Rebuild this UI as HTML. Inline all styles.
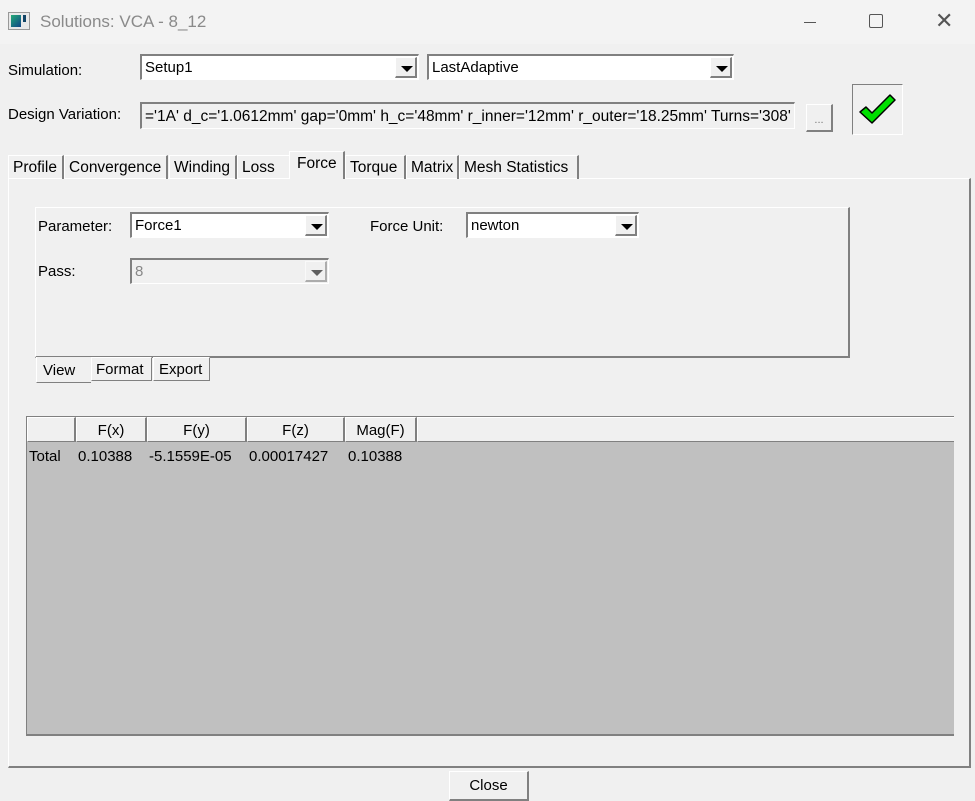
<!DOCTYPE html>
<html><head><meta charset="utf-8"><style>
*{box-sizing:border-box;margin:0;padding:0}
body{width:975px;height:793px;background:#f0f0f0;font-family:"Liberation Sans",Arial,sans-serif;font-size:15px;color:#000;position:relative;overflow:hidden}
.a{position:absolute}
.sunk{border-top:2px solid #808080;border-left:2px solid #808080;border-bottom:1px solid #fff;border-right:1px solid #fff;background:#fff}
.combo{position:absolute;height:26px;padding:3px 3px;white-space:nowrap;overflow:hidden}
.dd{position:absolute;right:1px;top:1px;bottom:1px;width:22px;background:#f0f0f0;border-right:2px solid #808080;border-bottom:2px solid #808080;border-top:1px solid #fff;border-left:1px solid #fff}
.dd:after{content:"";position:absolute;left:5px;top:8px;border-left:6px solid transparent;border-right:6px solid transparent;border-top:6px solid #000}
.tab{position:absolute;top:155px;height:24px;border-top:1px solid #fff;border-left:1px solid #fff;border-right:2px solid #808080;padding:3px 4px;white-space:nowrap;font-size:15.5px}
.btn{position:absolute;border-top:1px solid #fff;border-left:1px solid #fff;border-right:2px solid #808080;border-bottom:2px solid #808080;background:#f0f0f0;text-align:center}
.th{position:absolute;top:0;height:25px;border-right:2px solid #808080;border-top:1px solid #fff;border-left:1px solid #fff;border-bottom:1px solid #808080;text-align:center;padding-top:4px;background:#f0f0f0}
.td{position:absolute;top:31px}
</style></head><body>
<div class="a" style="left:0;top:0;width:975px;height:44px;background:#f3f3f3"></div>
<div class="a" style="left:8px;top:12px;width:22px;height:18px;border:1px solid #999;background:#e8e8e8"><div class="a" style="left:2px;top:2px;width:10px;height:12px;background:linear-gradient(135deg,#2a7,#148)"></div><div class="a" style="left:14px;top:2px;width:3px;height:7px;background:#146"></div></div>
<div class="a" style="left:40px;top:12px;font-size:17px;color:#8a8a8a">Solutions: VCA - 8_12</div>
<div class="a" style="left:804px;top:22px;width:12px;height:1px;background:#555"></div>
<div class="a" style="left:869px;top:14px;width:14px;height:14px;border:1.5px solid #555;border-radius:2px"></div>
<div class="a" style="left:935px;top:8px;font-size:22px;color:#555">✕</div>

<div class="a" style="left:8px;top:62px">Simulation:</div>
<div class="combo sunk" style="left:140px;top:54px;width:279px">Setup1<div class="dd"></div></div>
<div class="combo sunk" style="left:427px;top:54px;width:307px">LastAdaptive<div class="dd"></div></div>
<div class="a" style="left:8px;top:106px">Design Variation:</div>
<div class="combo sunk" style="left:140px;top:102px;width:655px;height:27px;background:#f0f0f0;padding-top:4px;font-size:15.5px">='1A' d_c='1.0612mm' gap='0mm' h_c='48mm' r_inner='12mm' r_outer='18.25mm' Turns='308'</div>
<div class="btn" style="left:806px;top:104px;width:27px;height:28px;font-size:11px;color:#777;padding-top:9px">...</div>
<div class="a" style="left:852px;top:84px;width:51px;height:51px;border-top:1px solid #808080;border-left:1px solid #808080;border-right:1px solid #fff;border-bottom:1px solid #fff">
<svg width="49" height="49" viewBox="0 0 49 49" style="position:absolute;left:0;top:0"><path d="M7 27 L13 22 L19 28 L37 10 L42 15 L19 38 Z" fill="#00e000" stroke="#000" stroke-width="1.5" stroke-linejoin="round"/></svg></div>

<div class="a" style="left:8px;top:178px;width:963px;height:590px;border-top:1px solid #fff;border-left:1px solid #fff;border-right:2px solid #808080;border-bottom:2px solid #808080"></div>
<div class="tab" style="left:8px;width:56px">Profile</div>
<div class="tab" style="left:64px;width:104px">Convergence</div>
<div class="tab" style="left:169px;width:68px">Winding</div>
<div class="tab" style="left:237px;width:52px;border-right:none">Loss</div>
<div class="tab" style="left:289px;top:151px;height:28px;width:56px;background:#f0f0f0;padding-left:7px">Force</div>
<div class="tab" style="left:345px;width:61px">Torque</div>
<div class="tab" style="left:406px;width:53px">Matrix</div>
<div class="tab" style="left:459px;width:120px">Mesh Statistics</div>

<div class="a" style="left:35px;top:207px;width:815px;height:151px;border-top:1px solid #fff;border-left:1px solid #fff;border-right:2px solid #808080;border-bottom:2px solid #808080"></div>
<div class="a" style="left:38px;top:218px">Parameter:</div>
<div class="combo sunk" style="left:130px;top:212px;width:199px">Force1<div class="dd"></div></div>
<div class="a" style="left:370px;top:218px">Force Unit:</div>
<div class="combo sunk" style="left:466px;top:212px;width:173px">newton<div class="dd"></div></div>
<div class="a" style="left:38px;top:263px">Pass:</div>
<div class="combo sunk" style="left:130px;top:258px;width:199px;background:#f0f0f0;color:#888">8<div class="dd" style="opacity:.6"></div></div>

<div class="a" style="left:36px;top:357px;width:55px;height:26px;border-left:1px solid #fff;border-bottom:1px solid #808080;padding:5px 6px;background:#f0f0f0">View</div>
<div class="a" style="left:91px;top:357px;width:61px;height:24px;border:1px solid #808080;border-top-color:#fff;border-left-color:#fff;padding:3px 4px">Format</div>
<div class="a" style="left:153px;top:357px;width:57px;height:24px;border:1px solid #808080;border-top-color:#fff;border-left-color:#fff;padding:3px 5px">Export</div>

<div class="a" style="left:26px;top:416px;width:928px;height:320px;background:#c0c0c0;border-left:1px solid #808080;border-top:1px solid #808080;border-bottom:2px solid #808080">
<div class="th" style="left:0;width:49px"></div>
<div class="th" style="left:49px;width:71px">F(x)</div>
<div class="th" style="left:120px;width:100px">F(y)</div>
<div class="th" style="left:220px;width:98px">F(z)</div>
<div class="th" style="left:318px;width:72px">Mag(F)</div>
<div class="th" style="left:390px;width:537px;border-right:none"></div>
<div class="td" style="left:2px">Total</div>
<div class="td" style="left:51px">0.10388</div>
<div class="td" style="left:122px">-5.1559E-05</div>
<div class="td" style="left:222px">0.00017427</div>
<div class="td" style="left:321px">0.10388</div>
</div>

<div class="btn" style="left:449px;top:771px;width:80px;height:30px;padding-top:5px">Close</div>
</body></html>
